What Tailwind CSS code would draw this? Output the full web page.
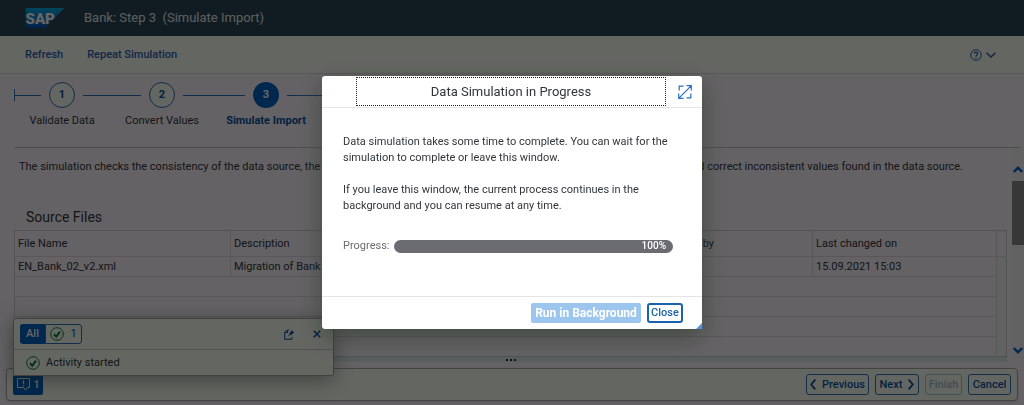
<!DOCTYPE html>
<html lang="en">
<head>
  <meta charset="UTF-8">
  <meta name="viewport" content="width=device-width, initial-scale=1.0">
  <title>Bank: Step 3 (Simulate Import)</title>
  <script src="https://cdn.jsdelivr.net/npm/@tailwindcss/browser@4"></script>
  <style>
    body { font-family: 'Roboto', 'Liberation Sans', sans-serif; }
  </style>
</head>
<body class="bg-[#fbf4fb] text-[#32363a] text-[11px] leading-4">

  <div class="relative min-h-screen flex flex-col">

    <!-- Shell header -->
    <header class="h-9 shrink-0 bg-[#2b4655] flex items-center gap-5 pl-6">
      <svg class="w-10 h-5" viewBox="0 0 40 20" aria-label="SAP">
        <defs>
          <linearGradient id="sapBlue" x1="0" y1="0" x2="0" y2="1">
            <stop offset="0" stop-color="#00b0e8"/>
            <stop offset="1" stop-color="#0a50b8"/>
          </linearGradient>
        </defs>
        <path d="M1.500 0H40.500L20.500 20H1.500Z" fill="url(#sapBlue)"/>
        <text x="1.500" y="15.500" font-size="15" font-weight="900" fill="#fff" font-family="Roboto, sans-serif">SAP</text>
      </svg>
      <h1 class="text-[13px] text-[#e4ecf2] whitespace-pre">Bank: Step 3  (Simulate Import)</h1>
    </header>

    <!-- Toolbar -->
    <nav class="h-[38px] shrink-0 bg-[#fbfff6] border-b border-[#dcdcd8] flex items-center gap-6 pl-[25px] pr-7 text-[#2a64b0] font-medium">
      <a href="#">Refresh</a>
      <a href="#">Repeat Simulation</a>
      <button class="ml-auto flex items-center gap-1" aria-label="Help">
        <svg class="w-3 h-3" viewBox="0 0 12 12" fill="none" stroke="currentColor">
          <circle cx="6" cy="6" r="5.300"/>
          <path d="M4.300 4.800C4.300 2.500 7.800 2.500 7.700 4.700C7.700 5.900 6 5.900 6 7.400M6 8.300V9.400" stroke-width="1.300"/>
        </svg>
        <svg class="w-[10px] h-[6px]" viewBox="0 0 10 6" fill="none" stroke="currentColor" stroke-width="1.500">
          <path d="M0.500 0.700L5 5L9.500 0.700"/>
        </svg>
      </button>
    </nav>

    <!-- Wizard steps -->
    <section class="h-[74px] shrink-0 border-b border-[#c4c0c4] ml-[14px] mr-1 pt-2">
      <ol class="flex">
        <li class="w-[27px] h-[26px] flex items-center" aria-hidden="true">
          <span class="h-3 w-px bg-[#2f74bb]"></span><span class="h-px flex-1 bg-[#2f74bb]"></span>
        </li>
        <li class="w-[42px] flex flex-col items-center gap-[5px]">
          <span class="size-[26px] rounded-full border border-[#2f74bb] bg-[#fbfff6] flex items-center justify-center font-bold text-[#0854a0]">1</span>
          <span class="whitespace-nowrap">Validate Data</span>
        </li>
        <li class="w-[58px] h-[26px] flex items-center" aria-hidden="true"><span class="h-px flex-1 bg-[#2f74bb]"></span></li>
        <li class="w-[42px] flex flex-col items-center gap-[5px]">
          <span class="size-[26px] rounded-full border border-[#2f74bb] bg-[#fbfff6] flex items-center justify-center font-bold text-[#0854a0]">2</span>
          <span class="whitespace-nowrap">Convert Values</span>
        </li>
        <li class="w-[62px] h-[26px] flex items-center" aria-hidden="true"><span class="h-px flex-1 bg-[#2f74bb]"></span></li>
        <li class="w-[42px] flex flex-col items-center gap-[5px]" aria-current="step">
          <span class="size-[26px] rounded-full bg-[#0062c4] flex items-center justify-center font-bold text-white">3</span>
          <span class="whitespace-nowrap font-bold text-[#0854a0]">Simulate Import</span>
        </li>
        <li class="w-[62px] h-[26px] flex items-center" aria-hidden="true"><span class="h-px flex-1 bg-[#2f74bb]"></span></li>
      </ol>
    </section>

    <!-- Step content -->
    <div class="flex flex-1">
      <main class="flex-1 min-w-0 pl-[14px] pr-1">
        <p class="pl-[5px] pr-11 pt-[11px] flex justify-between whitespace-nowrap">
          <span>The simulation checks the consistency of the data source, the</span>
          <span>and correct inconsistent values found in the data source.</span>
        </p>
        <h2 class="pl-3 pt-8 pb-[3px] text-[14px] leading-5">Source Files</h2>
        <table class="w-full table-fixed border-collapse border border-[#d4ccd4] text-left">
          <colgroup>
            <col class="w-[216px]"><col class="w-[216px]"><col><col class="w-[184px]"><col class="w-[10px]">
          </colgroup>
          <thead>
            <tr class="h-[26px] border-b border-[#e0d8e0]">
              <th class="pl-[3px] font-normal border-r border-[#e0d8e0]">File Name</th>
              <th class="pl-[3px] font-normal border-r border-[#e0d8e0]">Description</th>
              <th class="pr-[98px] font-normal text-right">by</th>
              <th class="pl-[3px] font-normal border-l border-[#e0d8e0]">Last changed on</th>
              <th class="border-l border-[#e0d8e0]"></th>
            </tr>
          </thead>
          <tbody>
            <tr class="h-5 border-b border-[#e0d8e0]">
              <td class="pl-[3px] border-r border-[#e0d8e0]">EN_Bank_02_v2.xml</td>
              <td class="pl-[3px] border-r border-[#e0d8e0]">Migration of Bank</td>
              <td></td>
              <td class="pl-[3px] border-l border-[#e0d8e0]">15.09.2021 15:03</td>
              <td rowspan="5" class="bg-[#f0f8ee] border-l border-[#e0d8e0]"></td>
            </tr>
            <tr class="h-5 border-b border-[#e0d8e0]"><td colspan="4"></td></tr>
            <tr class="h-5 border-b border-[#e0d8e0]"><td colspan="4"></td></tr>
            <tr class="h-5 border-b border-[#e0d8e0]"><td colspan="4"></td></tr>
            <tr class="h-5"><td colspan="4"></td></tr>
          </tbody>
        </table>
        <div class="h-[5px] bg-[#dcecea] flex items-center justify-center">
          <span class="w-[10px] border-t-2 border-dotted border-[#32363a]"></span>
        </div>
      </main>

      <!-- Scrollbar -->
      <div class="w-[13px] flex flex-col items-center pt-[18px] pb-2 bg-[#f8f6f6] text-[#0864c8]">
        <svg class="w-[10px] h-[7px]" viewBox="0 0 10 7" fill="none" stroke="currentColor" stroke-width="2.400"><path d="M0.800 6L5 1.800L9.200 6"/></svg>
        <span class="mt-2 h-16 w-3 bg-[#8a8a8c]"></span>
        <svg class="mt-auto w-[10px] h-[7px]" viewBox="0 0 10 7" fill="none" stroke="currentColor" stroke-width="2.400"><path d="M0.800 1L5 5.200L9.200 1"/></svg>
      </div>
    </div>

    <!-- Footer bar -->
    <footer class="mx-[6px] mt-[6px] mb-1 h-[33px] shrink-0 bg-[#fbfff6] border border-[#a8a8a4] rounded shadow flex items-center gap-[6px] px-[6px] text-[#0854a0] font-medium">
      <button class="mr-auto h-5 w-[30px] rounded-xs bg-[#0062c4] text-white text-[10px] font-bold flex items-center justify-center gap-1">
        <svg class="w-[13px] h-[13px]" viewBox="0 0 13 13" fill="none" stroke="currentColor"><path d="M0.500 0.500H12.500V9.500H10.500L8.500 12L6.500 9.500H0.500Z"/><path d="M6.500 2.300V6M6.500 7V8.200" stroke-width="1.300"/></svg>
        1
      </button>
      <button class="h-[21px] w-[63px] rounded-[3px] border border-[#2f74bb] flex items-center justify-center gap-[6px]">
        <svg class="w-[6px] h-[11px]" viewBox="0 0 6 11" fill="none" stroke="currentColor" stroke-width="1.800"><path d="M5.300 0.600L1.200 5.500L5.300 10.400"/></svg>
        Previous
      </button>
      <button class="h-[21px] w-[44px] rounded-[3px] border border-[#2f74bb] flex items-center justify-center gap-[6px]">
        Next
        <svg class="w-[6px] h-[11px]" viewBox="0 0 6 11" fill="none" stroke="currentColor" stroke-width="1.800"><path d="M0.700 0.600L4.800 5.500L0.700 10.400"/></svg>
      </button>
      <button disabled class="h-[21px] w-[37px] rounded-[3px] border border-[#2f74bb] opacity-40">Finish</button>
      <button class="h-[21px] w-[43px] rounded-[3px] border border-[#2f74bb]">Cancel</button>
    </footer>

    <!-- Message popover -->
    <aside class="absolute left-[13px] bottom-[29px] w-[321px] h-[58px] rounded-xs border border-[#a0a49c] bg-[#fbfff6] shadow-[0_4px_20px_rgba(50,70,50,0.5)]">
      <div class="h-[31px] border-b border-[#c8ccc4] flex items-center pl-[6px] pr-3 text-[#0854a0]">
        <button class="h-5 w-[25px] rounded-l-[3px] bg-[#0062c4] text-white font-medium">All</button>
        <button class="h-5 w-[37px] rounded-r-[3px] border border-[#2f74bb] flex items-center justify-center gap-[6px]">
          <svg class="w-[14px] h-[14px] text-[#107e3e]" viewBox="0 0 14 14" fill="none" stroke="currentColor"><circle cx="7" cy="7" r="6.300"/><path d="M4 7.300L6.300 9.600L10 4.600" stroke-width="2"/></svg>
          1
        </button>
        <button class="ml-auto" aria-label="Open in new window">
          <svg class="w-[11px] h-[11px]" viewBox="0 0 11 11" fill="none" stroke="currentColor"><path d="M3.500 1.500H2.500L0.700 3.300V10.300H7.800V8M5 1H3.500V3.500H1"/><path d="M7.500 1L10.400 3.900L8.800 4.300L7 6.200L5.200 4.400L7 2.600Z" fill="currentColor" stroke="none"/><path d="M4.200 7.300L6.300 5.200"/></svg>
        </button>
        <button class="ml-[18px]" aria-label="Close messages">
          <svg class="w-[8px] h-[8px]" viewBox="0 0 8 8" stroke="currentColor" stroke-width="1.600"><path d="M0.800 0.800L7.200 7.200M7.200 0.800L0.800 7.200"/></svg>
        </button>
      </div>
      <div class="h-[25px] flex items-center gap-[6px] pl-3">
        <svg class="w-[14px] h-[14px] text-[#107e3e]" viewBox="0 0 14 14" fill="none" stroke="currentColor"><circle cx="7" cy="7" r="6.300"/><path d="M4 7.300L6.300 9.600L10 4.600" stroke-width="2"/></svg>
        Activity started
      </div>
    </aside>
  </div>

  <!-- Dialog -->
  <div class="fixed inset-0 bg-black/60 flex items-center justify-center">
    <div role="dialog" aria-labelledby="dialogTitle" class="relative w-[380px] bg-white rounded-[3px] shadow-[0_8px_24px_rgba(40,55,40,0.6)]">
      <header class="h-8 border-b border-[#e4e4e4] flex items-center pl-[34px] pr-[10px] gap-3">
        <h2 id="dialogTitle" tabindex="0" class="flex-1 h-[29px] border border-dotted border-[#222] flex items-center justify-center text-[13px]">Data Simulation in Progress</h2>
        <button class="text-[#2a6fc0]" aria-label="Maximize">
          <svg class="w-[14px] h-[14px]" viewBox="0 0 14 14" fill="none" stroke="currentColor" stroke-width="1.200"><path d="M8.500 0.700H13.300V5.500M13.300 0.700L0.700 13.300M0.700 8.500V13.300H5.500M5.500 1.200H1.200V5.500M12.800 8.500V12.800H8.500"/></svg>
        </button>
      </header>
      <div class="px-[21px] pt-[26px] pb-[42px]">
        <p>Data simulation takes some time to complete. You can wait for the simulation to complete or leave this window.</p>
        <p class="mt-4">If you leave this window, the current process continues in the background and you can resume at any time.</p>
        <div class="mt-6 flex items-center gap-1 mr-2">
          <span id="progressLabel" class="text-[#6a6d70]">Progress:</span>
          <div role="progressbar" aria-labelledby="progressLabel" aria-valuenow="100" class="flex-1 h-[13px] rounded-full bg-[#6a6c72] flex items-center justify-end pr-[7px] text-[10px] font-medium text-white">100%</div>
        </div>
      </div>
      <footer class="h-[33px] border-t border-[#e4e4e4] flex items-center justify-end gap-[6px] pr-[19px]">
        <button disabled class="h-5 w-[110px] rounded-xs bg-[#9cc6ee] text-white text-[12px] font-bold">Run in Background</button>
        <button class="h-5 w-9 rounded-[3px] border-2 border-[#1a62ae] text-[#1a62ae] font-medium">Close</button>
      </footer>
      <svg class="absolute right-0 bottom-0 w-[6px] h-[6px]" viewBox="0 0 6 6"><path d="M6 0V6H0Z" fill="#4a96e8"/></svg>
    </div>
  </div>

</body>
</html>
